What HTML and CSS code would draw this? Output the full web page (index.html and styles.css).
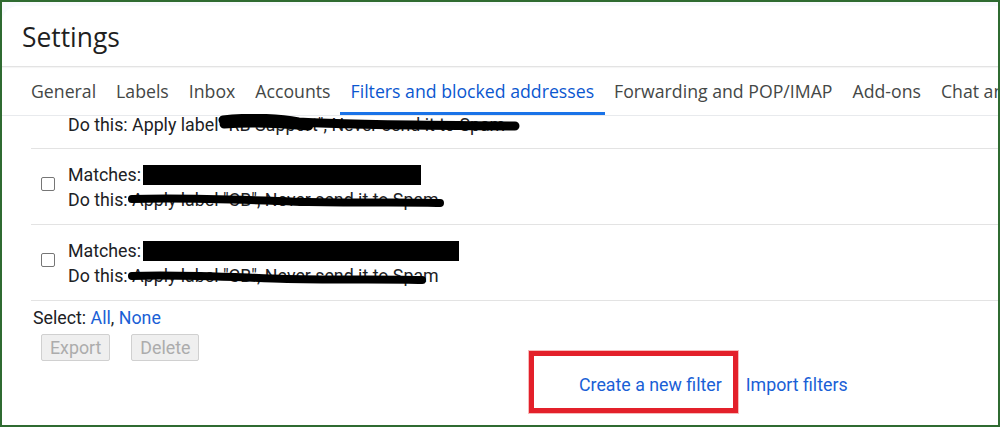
FILE: index.html
```html
<!DOCTYPE html>
<html lang="en">
<head>
<meta charset="utf-8">
<title>Settings - Filters and blocked addresses</title>
<link rel="stylesheet" href="styles.css">
</head>
<body>
<div class="frame">
  <div class="card">
    <header class="head">
      <h1 class="title">Settings</h1>
    </header>
    <nav class="tabs">
      <a class="tab">General</a>
      <a class="tab">Labels</a>
      <a class="tab">Inbox</a>
      <a class="tab">Accounts</a>
      <a class="tab active">Filters and blocked addresses</a>
      <a class="tab">Forwarding and POP/IMAP</a>
      <a class="tab">Add-ons</a>
      <a class="tab">Chat and Meet</a>
    </nav>
    <section class="content">
      <div class="row partial">
        <div class="line">Do this: Apply label <span class="scrib">"RB Support", Never send it to Spam<svg class="ink ink0" viewBox="0 0 300 18" preserveAspectRatio="none"><path d="M5 6 C30 3 60 4 80 8 C120 11 200 11 295 12" /><path d="M6 10 C30 8 60 9 90 12" /></svg></span></div>
      </div>
      <div class="row">
        <span class="check"></span>
        <div class="rules">
          <div class="line">Matches: <span class="redact w1"></span></div>
          <div class="line">Do this: <span class="scrib">Apply label "CB", Never send it to Spam<svg class="ink ink1" viewBox="0 0 316 14" preserveAspectRatio="none"><path d="M5 5 C60 3 120 6 180 8 C240 9 290 8 311 9" /></svg></span></div>
        </div>
      </div>
      <div class="row">
        <span class="check"></span>
        <div class="rules">
          <div class="line">Matches: <span class="redact w2"></span></div>
          <div class="line">Do this: <span class="scrib">Apply label "CB", Never send it to Spam<svg class="ink ink2" viewBox="0 0 300 14" preserveAspectRatio="none"><path d="M5 5 C50 3 100 6 160 8 C220 9 270 8 295 9" /></svg></span></div>
        </div>
      </div>
      <div class="select">Select: <a class="link">All</a>, <a class="link">None</a></div>
      <div class="buttons">
        <button class="btn" disabled>Export</button>
        <button class="btn" disabled>Delete</button>
      </div>
      <div class="actions">
        <a class="link">Create a new filter</a>
        <a class="link">Import filters</a>
        <span class="mark"></span>
      </div>
      <p class="blocked">The following email addresses are blocked. Messages from these addresses will appear in Spam:</p>
    </section>
  </div>
</div>
</body>
</html>
```

FILE: styles.css
```css
* { box-sizing: border-box; }
html, body { margin: 0; padding: 0; }
body {
  width: 1000px;
  height: 427px;
  overflow: hidden;
  font-family: Roboto, "Liberation Sans", Arial, sans-serif;
  color: #202124;
}
.frame {
  width: 1000px;
  height: 427px;
  border: 2px solid #2f6b31;
  background: #f8fafd;
  overflow: hidden;
  padding-top: 4px;
}
.card {
  background: #fff;
  border-top-left-radius: 16px;
  height: 100%;
  overflow: hidden;
}
.head {
  height: 61px;
  padding-left: 20px;
  border-bottom: 1px solid #e3e3e3;
  box-shadow: 0 1px 1px rgba(0,0,0,0.04);
}
.title {
  margin: 0;
  padding-top: 14px;
  font-family: "Open Sans", Roboto, sans-serif;
  font-weight: 400;
  font-size: 26.4px;
  line-height: 34px;
  color: #1f1f1f;
}
.tabs {
  display: flex;
  height: 49px;
  padding-left: 19px;
  border-bottom: 1px solid #e8eaed;
  white-space: nowrap;
}
.tab {
  padding: 0 10px;
  font-family: "Open Sans", Roboto, sans-serif;
  font-size: 17.7px;
  line-height: 48px;
  color: #444746;
  flex: none;
}
.tab.active {
  color: #0b57d0;
  padding: 0 11px;
  margin: 0 -1px;
  border-bottom: 3px solid #1a73e8;
}
.content {
  padding-left: 29px;
  font-size: 17.8px;
}
.row {
  display: flex;
  align-items: center;
  border-bottom: 1px solid #e3e3e3;
  padding: 13px 0 12px;
}
.row.partial {
  padding: 0 0 15px 37px;
}
.row.partial .line { line-height: 17px; }
.check {
  flex: none;
  width: 14px;
  height: 14px;
  margin: -6px 13px 0 10px;
  border: 1.5px solid #767676;
  border-radius: 2px;
}
.line {
  line-height: 25px;
  white-space: nowrap;
}
.redact {
  display: inline-block;
  height: 20px;
  background: #000;
  vertical-align: -4px;
  margin-left: -2px;
}
.w1 { width: 278px; }
.w2 { width: 316px; }
.scrib { position: relative; }
.ink {
  position: absolute;
  left: -5px;
  top: 50%;
  fill: none;
  stroke: #000;
  stroke-linecap: round;
}
.ink0 { width: 302px; height: 18px; margin-top: -11px; stroke-width: 9px; }
.ink1 { width: 318px; height: 14px; margin-top: -6px; stroke-width: 8px; }
.ink2 { width: 300px; height: 14px; margin-top: -5px; stroke-width: 8px; }
.select {
  padding: 4px 0 0 2px;
  line-height: 26px;
}
.link { color: #1a5fd6; }
.buttons {
  display: flex;
  gap: 21px;
  padding-left: 10px;
  margin-top: 3px;
}
.btn {
  height: 27px;
  padding: 0 8px;
  font-family: inherit;
  font-size: 17.8px;
  color: #acacac;
  background: #efefef;
  border: 1px solid #d0d0d0;
  border-radius: 2px;
}
.actions {
  position: relative;
  display: flex;
  gap: 24px;
  margin-top: 12px;
  padding-left: 548px;
  line-height: 24px;
}
.mark {
  position: absolute;
  left: 498px;
  top: -22px;
  width: 209px;
  height: 62px;
  border: 5px solid #e3202a;
  box-shadow: 0 0 0 1px rgba(240,120,120,0.5);
}
.blocked {
  margin: 26px 0 0 14px;
  font-weight: 700;
  font-size: 17px;
  line-height: 20px;
  white-space: nowrap;
}
```
